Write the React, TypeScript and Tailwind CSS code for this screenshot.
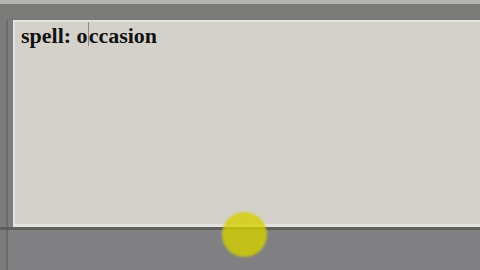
import React from "react";

export default function App() {
  return (
    <div className="relative w-[480px] h-[270px] overflow-hidden bg-[#7f7f80] flex flex-col">
      <div className="h-[4px] bg-[#b4b4b2] shrink-0" />
      <div className="h-[16px] bg-[#7a7b79] shrink-0" />
      <div className="flex shrink-0">
        <div className="w-[6px] bg-[#7c7c7c]" />
        <div className="w-[2px] bg-[#6c6c6c]" />
        <div className="w-[5px] bg-[#7e7e7e]" />
        <div className="flex-1 h-[207px] bg-[#d4d1cb] border-t-2 border-l-2 border-[#e6e4e0] border-b-[3px] border-b-[#e4e2de] relative">
          <div
            className="pl-[6px] pt-[1px] text-[22px] font-bold leading-[25px] text-[#111]"
            style={{ fontFamily: '"Liberation Serif", "Times New Roman", serif' }}
          >
            spell: o<span className="inline-block w-0 h-[24px] border-l border-[#8a8a8a] align-top -mt-[1px]" />ccasion
          </div>
        </div>
      </div>
      <div className="h-[3px] bg-[#5f5f5c] shrink-0" />
      <div className="flex flex-1">
        <div className="w-[6px] bg-[#7c7c7c]" />
        <div className="w-[2px] bg-[#6c6c6c]" />
        <div className="flex-1 bg-[#808083]" />
      </div>
      <div className="absolute left-[222px] top-[212px] w-[45px] h-[45px] rounded-full bg-[#d4d000]/80 blur-[1px]" />
    </div>
  );
}
